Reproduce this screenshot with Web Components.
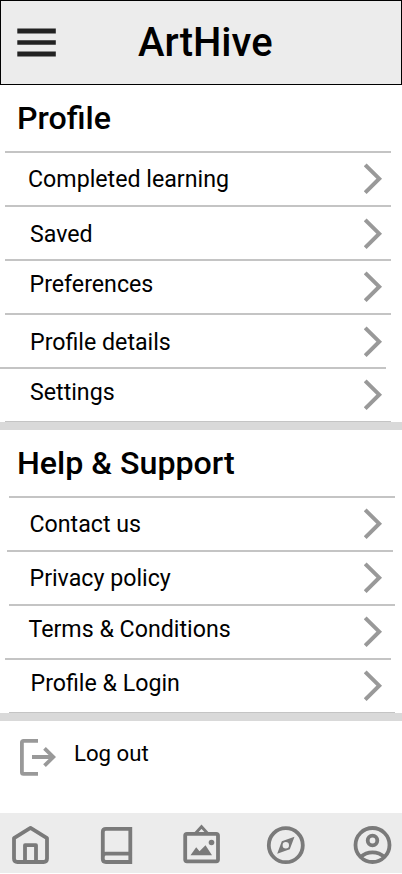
<!DOCTYPE html>
<html lang="en">
<head>
<meta charset="utf-8">
<meta name="viewport" content="width=device-width, initial-scale=1">
<title>ArtHive</title>
<style>
  html, body {
    margin: 0;
    background: #fff;
  }
  body {
    font-family: Roboto, "Liberation Sans", sans-serif;
    color: #000;
  }
</style>
</head>
<body>
<art-app>
  <app-header slot="header">ArtHive</app-header>
  <menu-section>
    <span slot="title">Profile</span>
    <menu-row style="--label-x: 28px; --label-y: 13px; --icon-y: 10px">Completed learning</menu-row>
    <menu-row style="--label-x: 30px; --label-y: 14px; --icon-y: 11px">Saved</menu-row>
    <menu-row style="--label-x: 29.5px; --label-y: 10px; --icon-y: 10px">Preferences</menu-row>
    <menu-row style="--label-x: 30px; --label-y: 14px; --icon-y: 11px">Profile details</menu-row>
    <menu-row style="--label-x: 30px; --label-y: 10px; --icon-y: 10px; --rule-x: 0px">Settings</menu-row>
  </menu-section>
  <menu-section style="--end-x: 9px">
    <span slot="title">Help &amp; Support</span>
    <menu-row style="--label-x: 29.5px; --label-y: 13px; --icon-y: 10px; --rule-x: 9px">Contact us</menu-row>
    <menu-row style="--label-x: 29.5px; --label-y: 13px; --icon-y: 10px; --rule-x: 7px">Privacy policy</menu-row>
    <menu-row style="--label-x: 28.5px; --label-y: 10px; --icon-y: 10px; --rule-x: 9px">Terms &amp; Conditions</menu-row>
    <menu-row style="--label-x: 30.5px; --label-y: 10px; --icon-y: 10px">Profile &amp; Login</menu-row>
  </menu-section>
  <logout-link>Log out</logout-link>
  <nav-bar slot="footer">
    <nav-icon name="home"></nav-icon>
    <nav-icon name="book"></nav-icon>
    <nav-icon name="gallery"></nav-icon>
    <nav-icon name="explore"></nav-icon>
    <nav-icon name="account"></nav-icon>
  </nav-bar>
</art-app>

<script>
class BaseElement extends HTMLElement {
  constructor() {
    super()
    this.attachShadow({mode: 'open'})
  }

  connectedCallback() {
    const template = document.createElement('template')
    template.innerHTML = this.render()
    this.shadowRoot.replaceChildren(template.content.cloneNode(true))
  }
}

class ArtApp extends BaseElement {
  render() {
    return `
      <style>
        :host {
          display: flex;
          flex-direction: column;
          width: 402px;
          height: 873px;
          overflow: hidden;
        }
        main {
          flex: 1;
        }
      </style>
      <slot name="header"></slot>
      <main><slot></slot></main>
      <slot name="footer"></slot>
    `
  }
}

class AppHeader extends BaseElement {
  render() {
    return `
      <style>
        :host {
          display: flex;
          align-items: center;
          box-sizing: border-box;
          height: 85px;
          padding-left: 16px;
          border: 1px solid #000;
          background: #ececec;
        }
        svg {
          flex: none;
          width: 40px;
          height: 30px;
        }
        h1 {
          margin: 0 0 0 81px;
          font-size: 40px;
          font-weight: 500;
          line-height: 48px;
        }
      </style>
      <svg viewBox="0 0 40 30" fill="#222">
        <path d="M.3.5h38.5v5H.3zM.3 12.2h38.5v4.6H.3zM.3 23.5h38.5v5H.3z"/>
      </svg>
      <h1><slot></slot></h1>
    `
  }
}

class MenuSection extends BaseElement {
  render() {
    return `
      <style>
        :host {
          display: block;
        }
        h2 {
          height: 66px;
          box-sizing: border-box;
          margin: 0;
          padding: 14px 0 0 17px;
          font-size: 32.2px;
          font-weight: 500;
          line-height: 38px;
        }
        .end {
          height: 1px;
          width: 386px;
          margin-left: var(--end-x, 5px);
          background: #c4c4c4;
        }
        .band {
          height: 8px;
          background: #d9d9d9;
        }
      </style>
      <h2><slot name="title"></slot></h2>
      <slot></slot>
      <div class="end"></div>
      <div class="band"></div>
    `
  }
}

class MenuRow extends BaseElement {
  render() {
    return `
      <style>
        :host {
          display: block;
          height: 54px;
          font-size: 23.2px;
          line-height: 26px;
        }
        .rule {
          height: 2px;
          width: 386px;
          margin-left: var(--rule-x, 5px);
          background: #c4c4c4;
        }
        .row {
          display: flex;
          align-items: flex-start;
          justify-content: space-between;
          padding: 0 16px 0 var(--label-x);
        }
        .label {
          padding-top: var(--label-y);
          white-space: nowrap;
        }
        svg {
          flex: none;
          width: 22px;
          height: 32px;
          margin-top: var(--icon-y);
        }
      </style>
      <div class="rule"></div>
      <div class="row">
        <span class="label"><slot></slot></span>
        <svg viewBox="0 0 22 32" fill="none" stroke="#999" stroke-width="4">
          <path d="M1.2 1.8 15.2 15.7 1.2 29.6"/>
        </svg>
      </div>
    `
  }
}

class LogoutLink extends BaseElement {
  render() {
    return `
      <style>
        :host {
          display: flex;
          align-items: flex-start;
          padding: 18px 0 0 18px;
          font-size: 22.2px;
          line-height: 26px;
        }
        svg {
          flex: none;
          width: 40px;
          height: 38px;
        }
        span {
          margin: 1px 0 0 16px;
        }
      </style>
      <svg viewBox="0 0 40 38" fill="none" stroke="#999" stroke-width="3.8">
        <path d="M20 1.9H5.5Q3.9 1.9 3.9 3.5V33.3Q3.9 34.9 5.5 34.9H20"/>
        <path d="M14 18H34M26.5 9.3 35.3 18 26.5 26.7"/>
      </svg>
      <span><slot></slot></span>
    `
  }
}

class NavBar extends BaseElement {
  render() {
    return `
      <style>
        :host {
          display: flex;
          flex: none;
          gap: 42px;
          box-sizing: border-box;
          height: 60px;
          padding: 10px 0 0 8px;
          background: #ececec;
        }
      </style>
      <slot></slot>
    `
  }
}

const ICONS = {
  home: `
    <path d="M6 15.2 22.5 4.9 39 15.2V35.5Q39 39 35.5 39H9.5Q6 39 6 35.5Z" stroke-linejoin="round"/>
    <path d="M17 39V22.2H28V39" stroke-linejoin="round"/>`,
  book: `
    <path d="M36.3 5.8H12Q8.8 5.8 8.8 9V36Q8.8 39 12 39H36.3ZM36.3 30.7H12Q8.8 30.7 8.8 34"/>`,
  gallery: `
    <rect x="5.2" y="10.8" width="32.8" height="27.5" rx="1.8"/>
    <path d="M15.3 10.5 21.5 3.7 27.7 10.5" stroke-width="2.8"/>
    <path d="M10.5 32.2 16.2 24.2 19.5 28.2 25.5 22.2 32 32.2Z" fill="#7a7a7a" stroke="none"/>
    <circle cx="31.5" cy="19.5" r="2.8" fill="#7a7a7a" stroke="none"/>`,
  explore: `
    <circle cx="19.8" cy="22.2" r="17"/>
    <path fill-rule="evenodd" d="M28.5 13.7 23.8 26.3 11.2 30.7 15.8 18.3ZM19.8 19A3.2 3.2 0 1 0 19.8 25.4 3.2 3.2 0 1 0 19.8 19Z" fill="#7a7a7a" stroke="none"/>`,
  account: `
    <circle cx="20.5" cy="22" r="17"/>
    <circle cx="20.5" cy="17.5" r="4.8"/>
    <path d="M8.4 34.2Q13.7 29.4 20.5 29.4T32.6 34.2"/>`
}

class NavIcon extends BaseElement {
  render() {
    return `
      <style>
        :host {
          display: block;
          flex: none;
          width: 44px;
          height: 44px;
        }
        svg {
          display: block;
        }
      </style>
      <svg width="44" height="44" viewBox="0 0 44 44" fill="none" stroke="#7a7a7a" stroke-width="3.8">
        ${ICONS[this.getAttribute('name')]}
      </svg>
    `
  }
}

customElements.define('art-app', ArtApp)
customElements.define('app-header', AppHeader)
customElements.define('menu-section', MenuSection)
customElements.define('menu-row', MenuRow)
customElements.define('logout-link', LogoutLink)
customElements.define('nav-bar', NavBar)
customElements.define('nav-icon', NavIcon)
</script>
</body>
</html>
